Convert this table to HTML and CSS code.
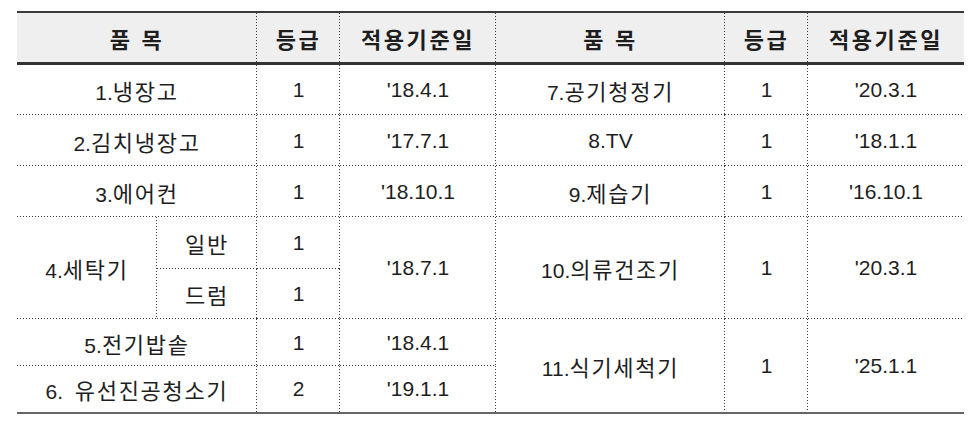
FILE: index.html
```html
<!DOCTYPE html>
<html lang="ko">
<head>
<meta charset="utf-8">
<link rel="stylesheet" href="styles.css">
</head>
<body>
<table class="grid">
  <colgroup>
    <col class="c-item"><col class="c-sub"><col class="c-grade"><col class="c-date">
    <col class="c-item2"><col class="c-grade"><col class="c-date">
  </colgroup>
  <thead>
    <tr class="head">
      <th colspan="2"><span class="ko">품 목</span></th><th><span class="ko">등급</span></th><th><span class="ko">적용기준일</span></th>
      <th><span class="ko">품 목</span></th><th><span class="ko">등급</span></th><th class="end"><span class="ko">적용기준일</span></th>
    </tr>
  </thead>
  <tbody>
    <tr class="r1">
      <td colspan="2">1.<span class="ko">냉장고</span></td><td>1</td><td>'18.4.1</td>
      <td>7.<span class="ko">공기청정기</span></td><td>1</td><td class="end">'20.3.1</td>
    </tr>
    <tr class="r2">
      <td colspan="2">2.<span class="ko">김치냉장고</span></td><td>1</td><td>'17.7.1</td>
      <td>8.TV</td><td>1</td><td class="end">'18.1.1</td>
    </tr>
    <tr class="r3">
      <td colspan="2">3.<span class="ko">에어컨</span></td><td>1</td><td>'18.10.1</td>
      <td>9.<span class="ko">제습기</span></td><td>1</td><td class="end">'16.10.1</td>
    </tr>
    <tr class="r4">
      <td rowspan="2">4.<span class="ko">세탁기</span></td><td><span class="ko">일반</span></td><td>1</td><td rowspan="2">'18.7.1</td>
      <td rowspan="2">10.<span class="ko">의류건조기</span></td><td rowspan="2">1</td><td rowspan="2" class="end">'20.3.1</td>
    </tr>
    <tr class="r5">
      <td><span class="ko">드럼</span></td><td>1</td>
    </tr>
    <tr class="r6">
      <td colspan="2">5.<span class="ko">전기밥솥</span></td><td>1</td><td>'18.4.1</td>
      <td rowspan="2" class="foot">11.<span class="ko">식기세척기</span></td><td rowspan="2" class="foot">1</td><td rowspan="2" class="foot end">'25.1.1</td>
    </tr>
    <tr class="r7">
      <td colspan="2" class="foot">6.&nbsp; <span class="ko">유선진공청소기</span></td><td class="foot">2</td><td class="foot">'19.1.1</td>
    </tr>
  </tbody>
</table>
</body>
</html>
```

FILE: styles.css
```css
html, body {
  margin: 0;
  background: #ffffff;
}
body {
  padding: 11px 8px 0 17px;
  font-family: "Liberation Sans", "Noto Sans CJK KR", sans-serif;
  color: #1e1e1e;
}
.grid {
  border-collapse: collapse;
  table-layout: fixed;
  width: 947px;
  font-size: 21px;
}
.c-item { width: 140px; }
.c-sub { width: 100px; }
.c-grade { width: 83px; }
.c-date { width: 156px; }
.c-item2 { width: 229px; }
.grid th,
.grid td {
  padding: 0;
  border: none;
  text-align: center;
  vertical-align: middle;
  white-space: pre;
  background-image:
    repeating-linear-gradient(to bottom, #3c3c3c 0 1px, transparent 1px 3px),
    repeating-linear-gradient(to right, #3c3c3c 0 1px, transparent 1px 3px);
  background-size: 1px 100%, 100% 1px;
  background-position: right top, left bottom;
  background-repeat: no-repeat;
}
.grid .end {
  background-size: 0 0, 100% 1px;
}
.grid .foot {
  background-size: 1px 100%, 0 0;
  border-bottom: 2px solid #666666;
}
.grid .foot.end {
  background-size: 0 0, 0 0;
}
.ko {
  font-family: "Noto Sans CJK KR", sans-serif;
  font-size: 22px;
  letter-spacing: 1.7px;
}
.head th {
  background-color: #efefef;
  background-size: 1px 100%, 0 0;
  font-weight: bold;
  height: 49px;
  border-top: 2px solid #3a3a3a;
  border-bottom: 3px solid #333333;
}
.head th.end {
  background-size: 0 0, 0 0;
}
.head .ko {
  letter-spacing: 2.6px;
}
.r1 td { height: 50px; }
.r2 td { height: 51px; }
.r3 td { height: 51px; }
.r4 td { height: 52px; }
.r5 td { height: 50px; }
.r6 td { height: 47px; }
.r7 td { height: 46px; }
```
